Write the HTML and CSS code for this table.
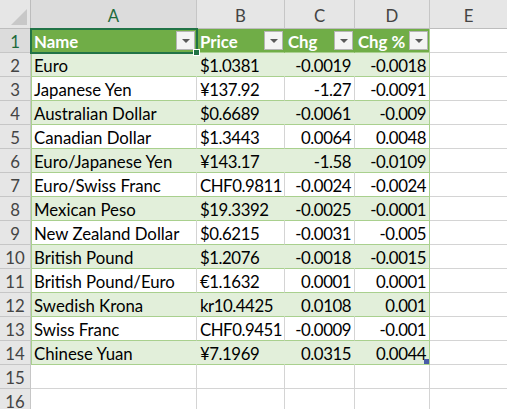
FILE: index.html
```html
<!DOCTYPE html>
<html>
<head>
<meta charset="utf-8">
<link rel="stylesheet" href="styles.css">
</head>
<body>
<div class="sheet">
  <div class="corner"><div class="corner-tri"></div></div>
  <div class="ch sel">A</div>
  <div class="ch">B</div>
  <div class="ch">C</div>
  <div class="ch">D</div>
  <div class="ch">E</div>

  <div class="rh sel">1</div>
  <div class="c th"><span>Name</span><i class="dd"></i></div>
  <div class="c th"><span>Price</span><i class="dd"></i></div>
  <div class="c th"><span>Chg</span><i class="dd"></i></div>
  <div class="c th last"><span>Chg %</span><i class="dd"></i></div>
  <div class="c"></div>

  <div class="rh">2</div>
  <div class="c g first">Euro</div><div class="c g n">$1.0381</div><div class="c g r n">-0.0019</div><div class="c g r n last">-0.0018</div><div class="c"></div>
  <div class="rh">3</div>
  <div class="c w first">Japanese Yen</div><div class="c w n">¥137.92</div><div class="c w r n">-1.27</div><div class="c w r n last">-0.0091</div><div class="c"></div>
  <div class="rh">4</div>
  <div class="c g first">Australian Dollar</div><div class="c g n">$0.6689</div><div class="c g r n">-0.0061</div><div class="c g r n last">-0.009</div><div class="c"></div>
  <div class="rh">5</div>
  <div class="c w first">Canadian Dollar</div><div class="c w n">$1.3443</div><div class="c w r n">0.0064</div><div class="c w r n last">0.0048</div><div class="c"></div>
  <div class="rh">6</div>
  <div class="c g first">Euro/Japanese Yen</div><div class="c g n">¥143.17</div><div class="c g r n">-1.58</div><div class="c g r n last">-0.0109</div><div class="c"></div>
  <div class="rh">7</div>
  <div class="c w first">Euro/Swiss Franc</div><div class="c w n">CHF0.9811</div><div class="c w r n">-0.0024</div><div class="c w r n last">-0.0024</div><div class="c"></div>
  <div class="rh">8</div>
  <div class="c g first">Mexican Peso</div><div class="c g n">$19.3392</div><div class="c g r n">-0.0025</div><div class="c g r n last">-0.0001</div><div class="c"></div>
  <div class="rh">9</div>
  <div class="c w first">New Zealand Dollar</div><div class="c w n">$0.6215</div><div class="c w r n">-0.0031</div><div class="c w r n last">-0.005</div><div class="c"></div>
  <div class="rh">10</div>
  <div class="c g first">British Pound</div><div class="c g n">$1.2076</div><div class="c g r n">-0.0018</div><div class="c g r n last">-0.0015</div><div class="c"></div>
  <div class="rh">11</div>
  <div class="c w first">British Pound/Euro</div><div class="c w n">€1.1632</div><div class="c w r n">0.0001</div><div class="c w r n last">0.0001</div><div class="c"></div>
  <div class="rh">12</div>
  <div class="c g first">Swedish Krona</div><div class="c g n">kr10.4425</div><div class="c g r n">0.0108</div><div class="c g r n last">0.001</div><div class="c"></div>
  <div class="rh">13</div>
  <div class="c w first">Swiss Franc</div><div class="c w n">CHF0.9451</div><div class="c w r n">-0.0009</div><div class="c w r n last">-0.001</div><div class="c"></div>
  <div class="rh">14</div>
  <div class="c g first">Chinese Yuan</div><div class="c g n">¥7.1969</div><div class="c g r n">0.0315</div><div class="c g r n last">0.0044<b class="resize"></b></div><div class="c"></div>
  <div class="rh">15</div>
  <div class="c"></div><div class="c"></div><div class="c"></div><div class="c"></div><div class="c"></div>
  <div class="rh">16</div>
  <div class="c"></div><div class="c"></div><div class="c"></div><div class="c"></div><div class="c"></div>

  <div class="selection"><div class="handle"></div></div>
</div>
</body>
</html>
```

FILE: styles.css
```css
html, body {
  margin: 0;
  padding: 0;
  background: #fff;
  overflow: hidden;
}
.sheet {
  position: relative;
  display: grid;
  grid-template-columns: 31px 166px 88px 70px 75px 78px;
  grid-template-rows: 29px;
  grid-auto-rows: 24px;
  font-family: Lato, "Liberation Sans", sans-serif;
  font-size: 16.8px;
  color: #000;
}
.sheet > div {
  box-sizing: border-box;
}
.corner {
  background: #e6e6e6;
  border-right: 1px solid #bdbdbd;
  border-bottom: 1px solid #bdbdbd;
  position: relative;
}
.corner-tri {
  position: absolute;
  right: 3px;
  bottom: 3px;
  width: 0;
  height: 0;
  border-left: 16px solid transparent;
  border-bottom: 16px solid #c8c8c8;
}
.ch {
  background: #e6e6e6;
  border-right: 1px solid #c6c6c6;
  border-bottom: 1px solid #bdbdbd;
  display: flex;
  align-items: center;
  justify-content: center;
  color: #444;
  padding-top: 3px;
}
.ch.sel {
  background: #dcdcdc;
  color: #1e6b3c;
}
.rh {
  background: #e6e6e6;
  border-right: 1px solid #c6c6c6;
  border-bottom: 1px solid #c6c6c6;
  display: flex;
  align-items: flex-end;
  justify-content: center;
  padding-bottom: 0;
  line-height: 21px;
  color: #444;
}
.rh.sel {
  background: #dcdcdc;
  color: #1e6b3c;
}
.c {
  border-right: 1px solid #d4d4d4;
  border-bottom: 1px solid #d4d4d4;
  display: flex;
  align-items: flex-end;
  padding: 0 3px 0 3px;
  line-height: 21px;
  white-space: nowrap;
  overflow: visible;
  position: relative;
}
.c.n {
  letter-spacing: -0.45px;
}
.c.r {
  justify-content: flex-end;
}
.c.g {
  background: #e2efda;
  border-right-color: #e2efda;
  border-bottom-color: #a9d08e;
}
.c.w {
  background: #fff;
  border-bottom-color: #a9d08e;
}
.c.first {
  box-shadow: inset 1px 0 0 #a9d08e;
}
.c.last {
  border-right-color: #a9d08e;
}
.c.th {
  background: #70ad47;
  border-right-color: #70ad47;
  border-bottom-color: #a9d08e;
  color: #fff;
  font-weight: bold;
  justify-content: space-between;
}
.c.th.last {
  border-right-color: #a9d08e;
}
.dd {
  position: absolute;
  right: 1px;
  top: 2px;
  width: 19px;
  height: 19px;
  box-sizing: border-box;
  background: #f4f4f4;
  border: 1px solid #b5b5b5;
}
.dd::after {
  content: "";
  position: absolute;
  left: 5px;
  top: 7px;
  border-left: 4px solid transparent;
  border-right: 4px solid transparent;
  border-top: 4px solid #595959;
}
.resize {
  position: absolute;
  right: 0;
  bottom: 0;
  width: 5px;
  height: 5px;
  background: #4a5ca8;
}
.selection {
  position: absolute;
  left: 30px;
  top: 28px;
  width: 168px;
  height: 26px;
  border: 2px solid #217346;
  box-sizing: border-box;
  pointer-events: none;
}
.handle {
  position: absolute;
  right: -4px;
  bottom: -4px;
  width: 5px;
  height: 5px;
  background: #217346;
  border: 1px solid #fff;
}
```
